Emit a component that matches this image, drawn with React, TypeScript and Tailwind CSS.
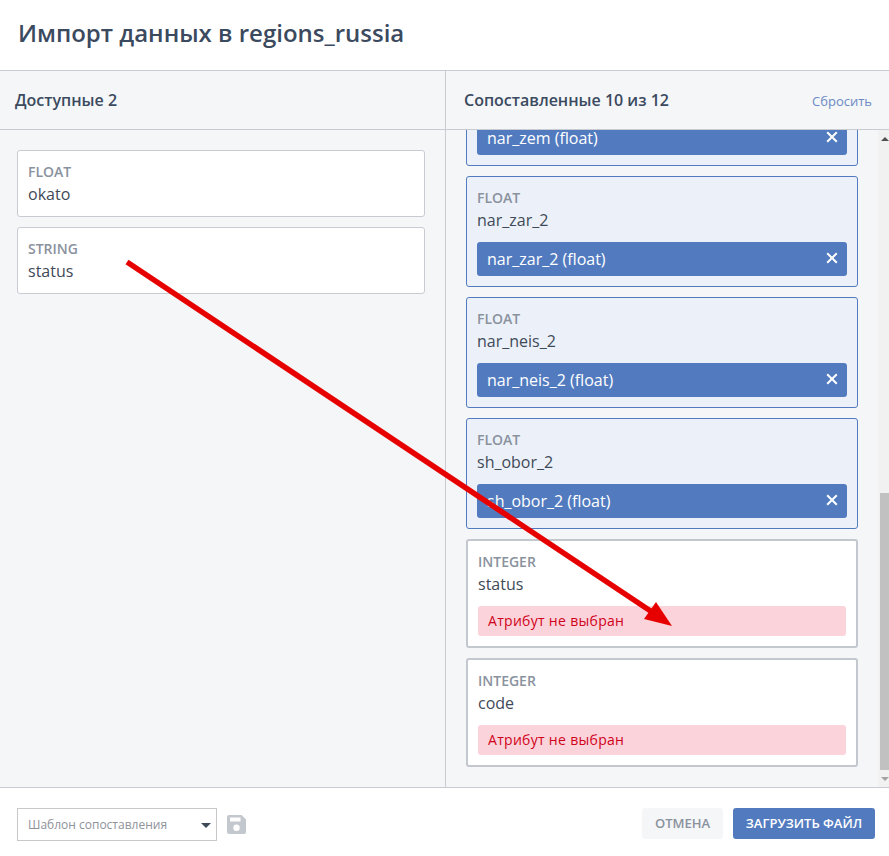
import React from "react";

function Chip({ text }: { text: string }) {
  return (
    <div className="mt-[11px] h-[34px] rounded-[3px] bg-[#527bbf] pl-[10px] pr-[9px] flex items-center justify-between text-white text-[16px] leading-[22px]">
      <span className="mt-[-1px]">{text}</span>
      <svg width="12" height="12" viewBox="0 0 12 12" className="mt-[-3px]">
        <path d="M1.2 1.2 L10.8 10.8 M10.8 1.2 L1.2 10.8" stroke="#fff" strokeWidth="2" fill="none" />
      </svg>
    </div>
  );
}

function Label({ children }: { children: React.ReactNode }) {
  return <div className="text-[14px] leading-[22px] font-semibold text-[#8a929e]">{children}</div>;
}

function Name({ children }: { children: React.ReactNode }) {
  return <div className="text-[16px] leading-[22px] text-[#3f4a58]">{children}</div>;
}

function Mapped({ name, extra }: { name: string; extra?: string }) {
  return (
    <div className={`border border-[#527bbf] rounded-[3px] bg-[#ecf1f9] px-[10px] pt-[10px] pb-[10px] h-[111px] shrink-0 ${extra ?? ""}`}>
      <Label>FLOAT</Label>
      <Name>{name}</Name>
      <Chip text={`${name} (float)`} />
    </div>
  );
}

function Unmapped({ name }: { name: string }) {
  return (
    <div className="border-2 border-[#c3c7ce] rounded-[3px] bg-white px-[10px] pt-[10px] h-[109px] shrink-0">
      <Label>INTEGER</Label>
      <Name>{name}</Name>
      <div className="mt-[11px] h-[30px] rounded-[3px] bg-[#fbd3da] pl-[10px] flex items-center text-[14px] tracking-[0.3px] text-[#d0021b]">
        <span className="mt-[-2px]">Атрибут не выбран</span>
      </div>
    </div>
  );
}

function Available({ type, name }: { type: string; name: string }) {
  return (
    <div className="border border-[#c8ccd2] rounded-[3px] bg-white px-[10px] pt-[10px] h-[67px]">
      <Label>{type}</Label>
      <Name>{name}</Name>
    </div>
  );
}

export default function App() {
  return (
    <div
      className="relative w-[889px] h-[856px] bg-white overflow-hidden flex flex-col text-[#3f4a58]"
      style={{ fontFamily: '"Open Sans", sans-serif' }}
    >
      <div className="h-[71px] shrink-0 border-b border-[#c8ccd2] pl-[18px] pt-[15px] text-[24px] leading-[36px] font-semibold text-[#3b4a5e]">
        Импорт данных в regions_russia
      </div>

      <div className="flex-1 min-h-0 flex bg-[#f4f6f8]">
        <div className="w-[446px] shrink-0 border-r border-[#c8ccd2] flex flex-col">
          <div className="h-[59px] shrink-0 border-b border-[#c8ccd2] pl-[15px] flex items-center text-[16px] font-semibold text-[#3b4a5e]">
            Доступные 2
          </div>
          <div className="pt-[20px] pl-[17px] pr-[20px] flex flex-col gap-[10px]">
            <Available type="FLOAT" name="okato" />
            <Available type="STRING" name="status" />
          </div>
        </div>

        <div className="flex-1 min-w-0 flex flex-col">
          <div className="h-[59px] shrink-0 border-b border-[#c8ccd2] pl-[18px] pr-[17px] flex items-center justify-between">
            <span className="text-[16px] font-semibold text-[#3b4a5e]">Сопоставленные 10 из 12</span>
            <span className="text-[13px] text-[#6d8ac4] mt-[4px]">Сбросить</span>
          </div>
          <div className="flex-1 min-h-0 flex">
            <div className="w-[432px] shrink-0 pl-[20px] pr-[20px] overflow-hidden flex flex-col gap-[10px]">
              <Mapped name="nar_zem" extra="mt-[-75px]" />
              <Mapped name="nar_zar_2" />
              <Mapped name="nar_neis_2" />
              <Mapped name="sh_obor_2" />
              <Unmapped name="status" />
              <Unmapped name="code" />
            </div>
            <div className="flex-1 bg-[#f1f1f1] flex flex-col items-end">
              <div className="h-[17px] w-[9px] flex items-center justify-center">
                <div className="w-0 h-0 border-x-[4px] border-x-transparent border-b-[4px] border-b-[#505050]" />
              </div>
              <div className="mt-[346px] h-[277px] w-[9px] bg-[#c1c1c1]" />
              <div className="h-[17px] w-[9px] flex items-center justify-center">
                <div className="w-0 h-0 border-x-[4px] border-x-transparent border-t-[4px] border-t-[#a3a3a3]" />
              </div>
            </div>
          </div>
        </div>
      </div>

      <div className="h-[69px] shrink-0 border-t border-[#c8ccd2] pl-[17px] pr-[14px] pt-[20px] flex items-start justify-between">
        <div className="flex items-start">
          <div className="w-[200px] h-[33px] border border-[#c8c8c8] pl-[10px] pr-[5px] flex items-center justify-between text-[12px] text-[#8e9299]">
            <span>Шаблон сопоставления</span>
            <div className="w-0 h-0 mt-[1px] border-x-[5px] border-x-transparent border-t-[5px] border-t-[#3f4a58]" />
          </div>
          <svg width="19" height="19" viewBox="0 0 19 19" className="ml-[10px] mt-[7px]">
            <path
              fillRule="evenodd"
              fill="#c3c7ce"
              d="M2 0 H14.5 L19 4.5 V17 A2 2 0 0 1 17 19 H2 A2 2 0 0 1 0 17 V2 A2 2 0 0 1 2 0 Z M3 2.5 V6.5 H13.5 V2.5 Z M9.5 9.5 A3.2 3.2 0 1 0 9.50 15.9 A3.2 3.2 0 1 0 9.5 9.5 Z"
            />
          </svg>
        </div>
        <div className="flex items-start gap-[10px]">
          <div className="w-[81px] h-[31px] rounded-[3px] bg-[#f5f6f8] flex items-center justify-center text-[13px] font-semibold text-[#8a929e]">
            ОТМЕНА
          </div>
          <div className="w-[142px] h-[31px] rounded-[3px] bg-[#527bbf] flex items-center justify-center text-[13px] font-semibold text-white">
            ЗАГРУЗИТЬ ФАЙЛ
          </div>
        </div>
      </div>

      <svg className="absolute left-0 top-0 pointer-events-none" width="889" height="856" viewBox="0 0 889 856">
        <path d="M127 262 L655 614" stroke="#e60000" strokeWidth="5.5" fill="none" />
        <path d="M672 626 L644 619 L656 602 Z" fill="#e60000" />
      </svg>
    </div>
  );
}
